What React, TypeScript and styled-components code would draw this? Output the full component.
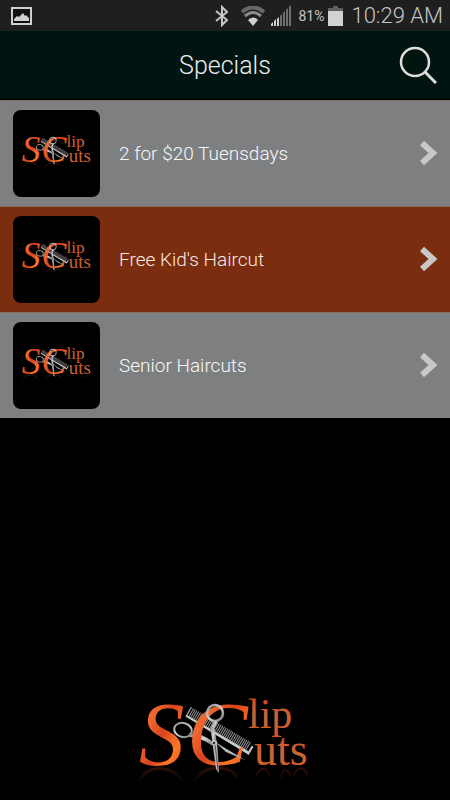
import React, { useId } from 'react';
import styled, { createGlobalStyle } from 'styled-components';

const GlobalStyle = createGlobalStyle`
  *, *::before, *::after { box-sizing: border-box; }
  body {
    margin: 0;
    background: #000;
    font-family: Roboto, "Liberation Sans", sans-serif;
    font-weight: 300;
  }
`;

const Screen = styled.div`
  display: flex;
  flex-direction: column;
  min-height: 100vh;
  background: #000;
`;

const StatusBar = styled.div`
  display: flex;
  align-items: center;
  justify-content: space-between;
  height: 31px;
  padding: 0 7px 0 11px;
  background: #1f1f1f;
  color: #c4c4c4;

  svg { display: block; flex: none; }
`;

const StatusGroup = styled.div`
  display: flex;
  align-items: center;
`;

const Indicator = styled.span<{ $gap: number }>`
  display: block;
  margin-right: ${({ $gap }) => $gap}px;
`;

const Percent = styled.span`
  margin-right: 4px;
  font-size: 14px;
  font-weight: 400;
`;

const Clock = styled.time`
  font-size: 22px;
  line-height: 31px;
`;

const Header = styled.header`
  display: grid;
  grid-template-columns: 64px 1fr 64px;
  align-items: center;
  height: 69px;
  background: #001411;
  border-bottom: 1px solid #000;
`;

const Title = styled.h1`
  grid-column: 2;
  margin: 0;
  padding-top: 2px;
  color: #ececec;
  font-size: 25px;
  font-weight: 300;
  line-height: 32px;
  text-align: center;
`;

const SearchButton = styled.button`
  display: flex;
  justify-content: center;
  padding: 0;
  border: 0;
  background: none;
  cursor: pointer;
`;

const List = styled.ul`
  margin: 0;
  padding: 0;
  list-style: none;
`;

const Row = styled.a<{ $active: boolean }>`
  display: flex;
  align-items: center;
  gap: 19px;
  height: 106px;
  padding: 0 12px 0 13px;
  border-top: 1px solid #8a6d62;
  border-bottom: 1px solid ${({ $active }) => ($active ? '#7b2d10' : '#7c7d7e')};
  background: ${({ $active }) => ($active ? '#7b2d10' : '#7e7f81')};
  color: ${({ $active }) => ($active ? '#fbe9e0' : '#f8f8f8')};
  text-decoration: none;
`;

const Tile = styled.span`
  display: flex;
  flex: none;
  align-items: center;
  justify-content: center;
  width: 87px;
  height: 87px;
  border-radius: 8px;
  background: #000;
`;

const Label = styled.span`
  flex: 1;
  padding-top: 2px;
  font-size: 19px;
  line-height: 24px;
`;

const Footer = styled.footer`
  display: flex;
  justify-content: center;
  margin-top: auto;
`;

const LogoSvg = styled.svg`
  display: block;
  flex: none;
  overflow: visible;
  font-family: "Liberation Serif", serif;
  font-weight: 400;
`;

const COMB_TEETH = Array.from({ length: 34 }, (_, i) => i * 2 + 3);

function Logo({ width, height }: { width: number; height: number }) {
  const id = useId().replace(/[^a-zA-Z0-9]/g, '');
  const fire = `fire${id}`;
  const small = `small${id}`;
  const steel = `steel${id}`;
  const fade = `fade${id}`;
  const mask = `mask${id}`;
  return (
    <LogoSvg width={width} height={height} viewBox="0 0 200 110" role="img" aria-label="S Clip Cuts">
      <defs>
        <linearGradient id={fire} x1="0" y1="0" x2="1" y2="1">
          <stop offset="0" stopColor="#c93a1c" />
          <stop offset="0.3" stopColor="#f0682f" />
          <stop offset="0.5" stopColor="#d8431c" />
          <stop offset="0.72" stopColor="#ff7626" />
          <stop offset="1" stopColor="#d83c18" />
        </linearGradient>
        <linearGradient id={small} x1="0" y1="0" x2="0" y2="1">
          <stop offset="0.2" stopColor="#d84a1c" />
          <stop offset="0.6" stopColor="#c6683a" />
          <stop offset="1" stopColor="#e0501e" />
        </linearGradient>
        <linearGradient id={steel} x1="0" y1="0" x2="1" y2="1">
          <stop offset="0" stopColor="#8b8b8b" />
          <stop offset="0.5" stopColor="#d2d2d2" />
          <stop offset="1" stopColor="#7b7b7b" />
        </linearGradient>
        <linearGradient id={fade} x1="0" y1="76" x2="0" y2="94" gradientUnits="userSpaceOnUse">
          <stop offset="0" stopColor="#fff" stopOpacity="0.3" />
          <stop offset="1" stopColor="#fff" stopOpacity="0" />
        </linearGradient>
        <mask id={mask} maskUnits="userSpaceOnUse" x="0" y="76" width="200" height="34">
          <rect x="0" y="76" width="200" height="34" fill={`url(#${fade})`} />
        </mask>
      </defs>
      <g mask={`url(#${mask})`} fill="none" stroke="#a83a1c" strokeWidth="3">
        <path d="M14 92C20 74 48 74 58 92M69 92C78 74 104 74 113 88" />
        <path d="M131 88C133 76 143 76 145 88M156 88C157 78 163 78 165 86M168 86C172 76 181 76 182 86" strokeWidth="2" />
      </g>
      <g transform="translate(66 17) rotate(30.5)">
        {COMB_TEETH.map((x) => (
          <path key={x} d={`M${x} 0V10`} stroke="#949494" strokeWidth="1" />
        ))}
        <path d="M0 0H1V9H72V2L74 3V12L70 12L0 11Z" fill="#c8c8c8" />
      </g>
      <g fill="none" stroke={`url(#${steel})`}>
        <ellipse cx="58" cy="40" rx="9" ry="7" strokeWidth="2" transform="rotate(15 58 40)" />
        <path d="M64 45Q76 45 88 54" strokeWidth="4" />
      </g>
      <g fill={`url(#${fire})`} fontSize="91" fontStyle="italic">
        <text x="14" y="75">S</text>
        <text x="62" y="75">C</text>
      </g>
      <g fill="none" stroke={`url(#${steel})`}>
        <ellipse cx="90" cy="23" rx="8" ry="8" strokeWidth="2.5" />
        <path d="M91 31L87 38L90 53" strokeWidth="4" />
      </g>
      <path d="M87 50L92 51L94 83L91 79Z" fill="#b4b4b4" />
      <path d="M89 51L95 55L120 70L101 62Z" fill="#b8b8b8" />
      <path d="M90 54L93 80" stroke="#555" strokeWidth="1" />
      <circle cx="89" cy="53" r="2" fill="#333" stroke="#ddd" strokeWidth="1" />
      <g fill={`url(#${small})`}>
        <text x="123" y="38" fontSize="42">lip</text>
        <text x="129" y="75" fontSize="46">uts</text>
      </g>
    </LogoSvg>
  );
}

function PictureIcon() {
  return (
    <svg width="21" height="18" viewBox="0 0 21 18">
      <rect x="1" y="1" width="19" height="16" fill="#111" stroke="#cfcfcf" strokeWidth="2" />
      <path d="M3 14V12L6 9L8 10L12 6L14 9L15 8L18 11V14Z" fill="#cfcfcf" />
    </svg>
  );
}

function BluetoothIcon() {
  return (
    <svg width="14" height="22" viewBox="0 0 14 22" fill="none" stroke="#c8c8c8" strokeWidth="2">
      <path d="M1 6L12 15L7 20V2L12 7L1 16" />
    </svg>
  );
}

function WifiIcon() {
  return (
    <svg width="24" height="20" viewBox="0 0 24 20" fill="none">
      <path d="M1 6Q12 -3 23 6" stroke="#686868" strokeWidth="4" />
      <path d="M4 10Q12 3 20 10" stroke="#8c8c8c" strokeWidth="3" />
      <path d="M7 14Q12 9 17 14L12 20Z" fill="#d0d0d0" />
    </svg>
  );
}

function SignalIcon() {
  return (
    <svg width="20" height="21" viewBox="0 0 20 21">
      <path d="M0 21V19L2 17V21ZM3 21V16L5 14V21ZM6 21V14L8 12V21Z" fill="#d0d0d0" />
      <path d="M9 21V11L11 9V21ZM12 21V8L14 6V21ZM15 21V5L17 3V21ZM18 21V2L20 0V21Z" fill="#6e6e6e" />
    </svg>
  );
}

function BatteryIcon() {
  return (
    <svg width="15" height="20" viewBox="0 0 15 20">
      <path d="M5 0H10V2H15V5H0V2H5Z" fill="#606060" />
      <path d="M0 5H15V20H0Z" fill="#d2d2d2" />
    </svg>
  );
}

function SearchIcon() {
  return (
    <svg width="38" height="38" viewBox="0 0 38 38" fill="none" stroke="#deded8">
      <circle cx="16" cy="16" r="14" strokeWidth="2.5" />
      <path d="M26 26L37 37" strokeWidth="3" />
    </svg>
  );
}

function Chevron() {
  return (
    <svg width="18" height="26" viewBox="0 0 18 26" fill="none" stroke="#c8c8c8" strokeWidth="6">
      <path d="M2 3L13 13L2 23" />
    </svg>
  );
}

const SPECIALS = [
  { label: '2 for $20 Tuensdays', active: false },
  { label: "Free Kid's Haircut", active: true },
  { label: 'Senior Haircuts', active: false },
];

export default function App() {
  return (
    <Screen>
      <GlobalStyle />
      <StatusBar>
        <PictureIcon />
        <StatusGroup>
          <Indicator $gap={12}><BluetoothIcon /></Indicator>
          <Indicator $gap={6}><WifiIcon /></Indicator>
          <Indicator $gap={7}><SignalIcon /></Indicator>
          <Percent>81%</Percent>
          <Indicator $gap={8}><BatteryIcon /></Indicator>
          <Clock>10:29 AM</Clock>
        </StatusGroup>
      </StatusBar>
      <Header>
        <Title>Specials</Title>
        <SearchButton type="button" aria-label="Search"><SearchIcon /></SearchButton>
      </Header>
      <main>
        <List>
          {SPECIALS.map(({ label, active }) => (
            <li key={label}>
              <Row href="#" $active={active}>
                <Tile><Logo width={82} height={45} /></Tile>
                <Label>{label}</Label>
                <Chevron />
              </Row>
            </li>
          ))}
        </List>
      </main>
      <Footer><Logo width={200} height={110} /></Footer>
    </Screen>
  );
}
